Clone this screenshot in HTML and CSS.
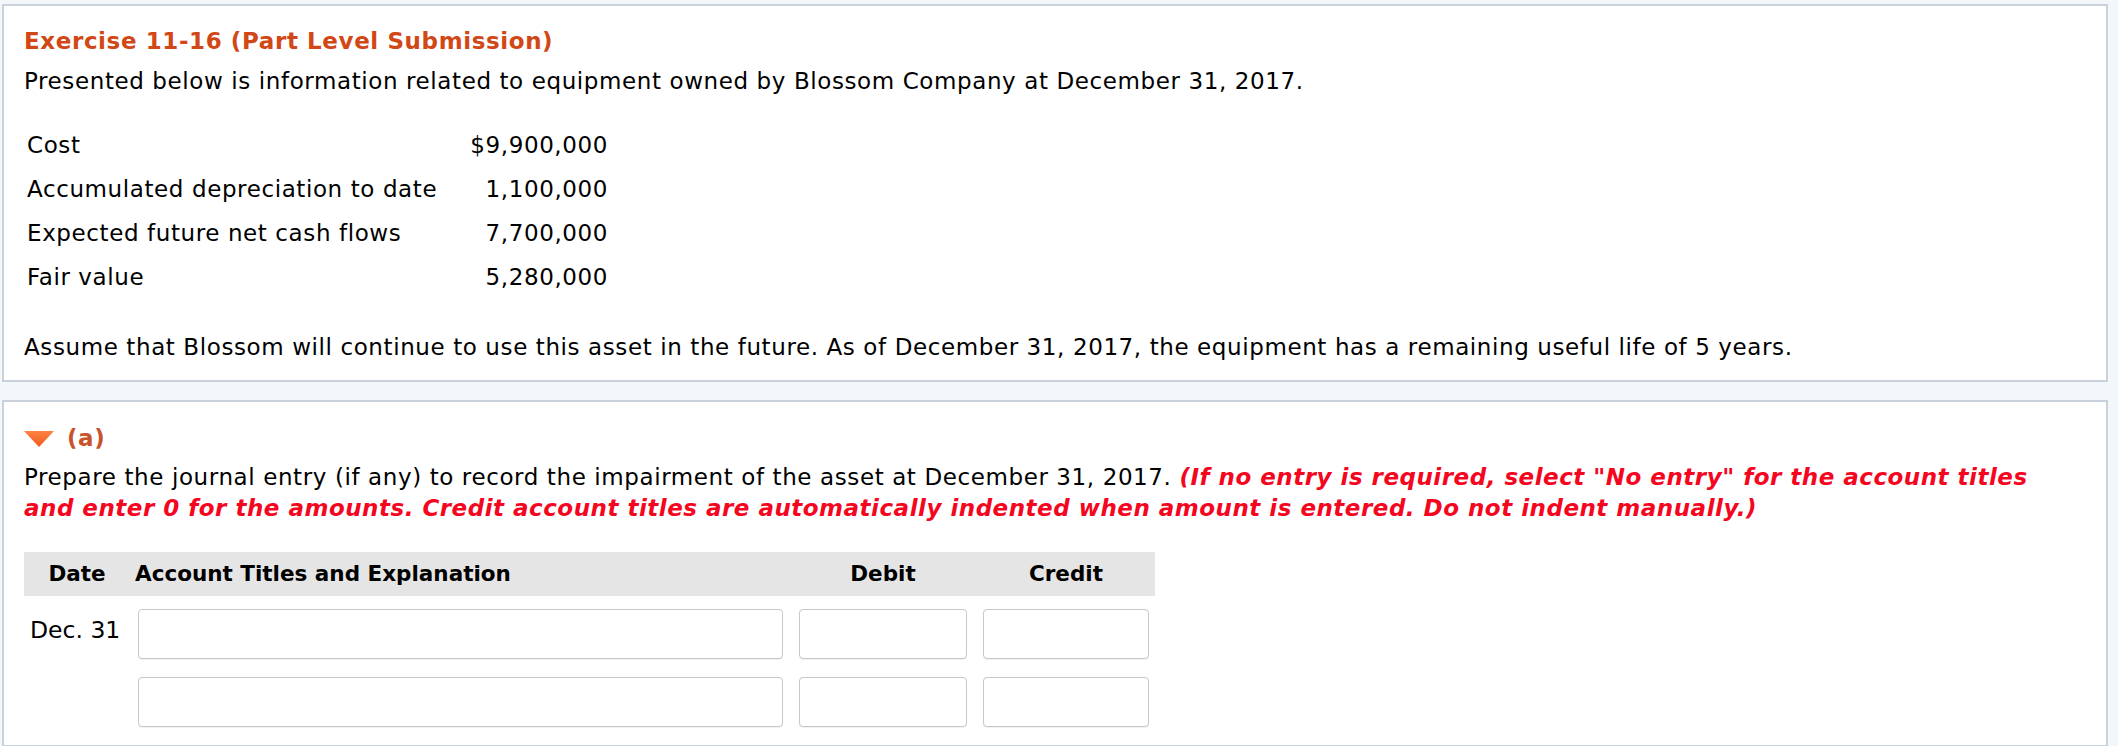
FILE: index.html
```html
<!DOCTYPE html>
<html>
<head>
<meta charset="utf-8">
<link rel="stylesheet" href="styles.css">
</head>
<body>
<div class="panel panel-intro">
  <h1 class="title">Exercise 11-16 (Part Level Submission)</h1>
  <p class="intro">Presented below is information related to equipment owned by Blossom Company at December 31, 2017.</p>
  <table class="data">
    <tr><td class="label">Cost</td><td class="amt">$9,900,000</td></tr>
    <tr><td class="label">Accumulated depreciation to date</td><td class="amt">1,100,000</td></tr>
    <tr><td class="label">Expected future net cash flows</td><td class="amt">7,700,000</td></tr>
    <tr><td class="label">Fair value</td><td class="amt">5,280,000</td></tr>
  </table>
  <p class="assume">Assume that Blossom will continue to use this asset in the future. As of December 31, 2017, the equipment has a remaining useful life of 5 years.</p>
</div>
<div class="panel panel-part">
  <div class="part-head">
    <svg class="tri" width="30" height="16" viewBox="0 0 30 16">
      <defs>
        <linearGradient id="g" x1="0" y1="0" x2="0" y2="1">
          <stop offset="0" stop-color="#ff8442"/>
          <stop offset="1" stop-color="#ee5a1c"/>
        </linearGradient>
      </defs>
      <polygon points="0,0 30,0 15,16" fill="url(#g)"/>
    </svg>
    <span class="part-label">(a)</span>
  </div>
  <p class="instr">Prepare the journal entry (if any) to record the impairment of the asset at December 31, 2017. <em class="warn">(If no entry is required, select "No entry" for the account titles and enter 0 for the amounts. Credit account titles are automatically indented when amount is entered. Do not indent manually.)</em></p>
  <div class="journal">
    <div class="jrow jhead">
      <div class="c-date">Date</div>
      <div class="c-acct">Account Titles and Explanation</div>
      <div class="c-num">Debit</div>
      <div class="c-num">Credit</div>
    </div>
    <div class="jrow jentry">
      <div class="c-date date-val">Dec. 31</div>
      <div class="box"></div>
      <div class="box"></div>
      <div class="box"></div>
    </div>
    <div class="jrow jentry">
      <div class="c-date date-val"></div>
      <div class="box"></div>
      <div class="box"></div>
      <div class="box"></div>
    </div>
  </div>
</div>
</body>
</html>
```

FILE: styles.css
```css
html, body {
  margin: 0;
  padding: 0;
  background: #f4f7fa;
}
body {
  font-family: "DejaVu Sans", Verdana, sans-serif;
  font-size: 23px;
  letter-spacing: 0.6px;
  line-height: 30px;
  color: #000;
  padding-top: 4px;
}
.panel {
  background: #fff;
  border: 2px solid #c9d1dd;
  margin: 0 10px 0 2px;
  padding: 20px 20px 18px 20px;
}
.panel-part {
  margin-top: 18px;
  padding-top: 21px;
}
.title {
  margin: 0;
  font-size: 23px;
  line-height: 30px;
  font-weight: bold;
  color: #d24716;
}
.intro {
  margin: 10px 0 0 0;
}
.data {
  border-collapse: collapse;
  margin-top: 26.5px;
  width: 584px;
}
.data td {
  padding: 7px 0;
  line-height: 30px;
}
.data .label {
  padding-left: 3px;
}
.data .amt {
  text-align: right;
}
.assume {
  margin: 33.5px 0 0 0;
}
.part-head {
  display: flex;
  align-items: center;
  gap: 13px;
  height: 30px;
}
.tri {
  display: block;
  margin-top: 2px;
}
.part-label {
  font-weight: bold;
  color: #c8532b;
}
.instr {
  margin: 9px 0 0 0;
  line-height: 31px;
  max-width: 2030px;
}
.warn {
  color: #f5061f;
  font-weight: bold;
  font-style: italic;
  letter-spacing: 0.5px;
}
.journal {
  margin-top: 28px;
  width: 1131px;
}
.jrow {
  display: grid;
  grid-template-columns: 98px 645px 168px 166px;
  column-gap: 16px;
  padding-right: 6px;
}
.jhead {
  background: #e5e5e5;
  height: 44px;
  align-items: center;
  font-weight: bold;
  font-size: 21.5px;
  letter-spacing: 0;
}
.jhead .c-date {
  text-align: center;
  padding-left: 8px;
}
.jhead .c-acct {
  text-indent: -3px;
}
.jhead .c-num {
  text-align: center;
}
.jentry {
  margin-top: 13px;
}
.jentry + .jentry {
  margin-top: 18px;
}
.date-val {
  font-size: 23.5px;
  letter-spacing: 0;
  padding-left: 6px;
  padding-top: 6px;
  white-space: nowrap;
}
.box {
  height: 48px;
  border: 1px solid #c8c8c8;
  border-radius: 4px;
  background: #fff;
  box-shadow: 0 1px 1px rgba(0,0,0,0.06);
}
```
